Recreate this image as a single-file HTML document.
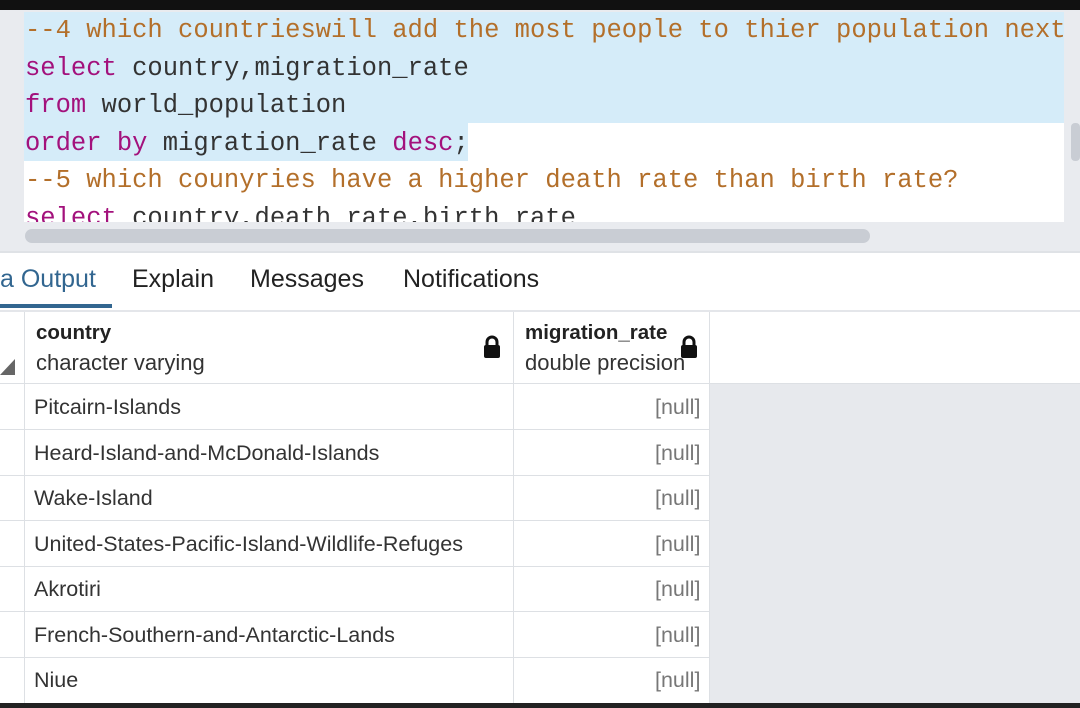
<!DOCTYPE html><html><head><style>
body{margin:0;width:1080px;height:708px;overflow:hidden;background:#fff;font-family:"Liberation Sans",sans-serif;position:relative}
.a{position:absolute}
.code{font-family:"Liberation Mono",monospace;font-size:25.5px;white-space:pre;color:#333;line-height:37.6px}
.c{color:#b36f2a}.k{color:#a3117c}
.t{position:absolute;font-size:21.5px;color:#333}
.tab{position:absolute;font-size:25px;color:#222;top:265px}
</style></head><body>
<div class="a" style="left:0;top:0;width:1080px;height:10px;background:#111"></div>
<div class="a" style="left:0;top:10px;width:1080px;height:241px;background:#e9ebef"></div>
<div class="a" style="left:24px;top:12px;width:1040px;height:210px;background:#fff;overflow:hidden">
<div class="a" style="left:0;top:0;width:1040px;height:111px;background:#d5ecf9"></div>
<div class="a" style="left:0;top:111px;width:444px;height:38px;background:#d5ecf9"></div>
<div class="a code" style="left:1px;top:0px"><span class="c">--4 which countrieswill add the most people to thier population next</span>
<span class="k">select</span> country,migration_rate
<span class="k">from</span> world_population
<span class="k">order by</span> migration_rate <span class="k">desc</span>;
<span class="c">--5 which counyries have a higher death rate than birth rate?</span>
<span class="k">select</span> country,death_rate,birth_rate</div>
</div>
<div class="a" style="left:1071px;top:123px;width:9px;height:38px;background:#c9cdd4;border-radius:4px"></div>
<div class="a" style="left:25px;top:229px;width:845px;height:14px;background:#c9cdd4;border-radius:7px"></div>
<div class="a" style="left:0;top:251px;width:1080px;height:2px;background:#dfe2e6"></div>
<div class="tab" style="left:0;color:#326690">a Output</div>
<div class="tab" style="left:132px">Explain</div>
<div class="tab" style="left:250px">Messages</div>
<div class="tab" style="left:403px">Notifications</div>
<div class="a" style="left:0;top:304px;width:112px;height:4px;background:#326690"></div>
<div class="a" style="left:0;top:310px;width:1080px;height:2px;background:#e4e6ea"></div>
<div class="a" style="left:709px;top:383px;width:371px;height:320px;background:#e7e9ed"></div>
<div class="a" style="left:0;top:383px;width:1080px;height:1px;background:#dde0e4"></div>
<div class="a" style="left:24px;top:312px;width:1px;height:391px;background:#dde0e4"></div>
<div class="a" style="left:513px;top:312px;width:1px;height:391px;background:#dde0e4"></div>
<div class="a" style="left:709px;top:312px;width:1px;height:391px;background:#dde0e4"></div>
<svg class="a" style="left:0;top:357px" width="16" height="20"><polygon points="15,2 15,18 0,18" fill="#666"/></svg>
<div class="t" style="left:36px;top:321px;font-weight:bold;color:#222;font-size:20.5px">country</div>
<div class="t" style="left:36px;top:350px;font-size:22px">character varying</div>
<div class="t" style="left:525px;top:321px;font-weight:bold;color:#222;font-size:20.5px">migration_rate</div>
<div class="t" style="left:525px;top:350px;font-size:22px">double precision</div>
<svg class="a" style="left:482px;top:335px" width="20" height="24"><path d="M5 11V7a5 5 0 0 1 10 0v4" stroke="#111" stroke-width="3" fill="none"/><rect x="2" y="10" width="16" height="13" rx="2" fill="#111"/></svg>
<svg class="a" style="left:679px;top:335px" width="20" height="24"><path d="M5 11V7a5 5 0 0 1 10 0v4" stroke="#111" stroke-width="3" fill="none"/><rect x="2" y="10" width="16" height="13" rx="2" fill="#111"/></svg>
<div class="a" style="left:0;top:429px;width:709px;height:1px;background:#dde0e4"></div>
<div class="a" style="left:0;top:475px;width:709px;height:1px;background:#dde0e4"></div>
<div class="a" style="left:0;top:520px;width:709px;height:1px;background:#dde0e4"></div>
<div class="a" style="left:0;top:566px;width:709px;height:1px;background:#dde0e4"></div>
<div class="a" style="left:0;top:611px;width:709px;height:1px;background:#dde0e4"></div>
<div class="a" style="left:0;top:657px;width:709px;height:1px;background:#dde0e4"></div>
<div class="t" style="left:34px;top:395px">Pitcairn-Islands</div>
<div class="t" style="left:34px;top:441px">Heard-Island-and-McDonald-Islands</div>
<div class="t" style="left:34px;top:486px">Wake-Island</div>
<div class="t" style="left:34px;top:532px">United-States-Pacific-Island-Wildlife-Refuges</div>
<div class="t" style="left:34px;top:577px">Akrotiri</div>
<div class="t" style="left:34px;top:623px">French-Southern-and-Antarctic-Lands</div>
<div class="t" style="left:34px;top:668px">Niue</div>
<div class="t" style="left:655px;top:395px;color:#777">[null]</div>
<div class="t" style="left:655px;top:441px;color:#777">[null]</div>
<div class="t" style="left:655px;top:486px;color:#777">[null]</div>
<div class="t" style="left:655px;top:532px;color:#777">[null]</div>
<div class="t" style="left:655px;top:577px;color:#777">[null]</div>
<div class="t" style="left:655px;top:623px;color:#777">[null]</div>
<div class="t" style="left:655px;top:668px;color:#777">[null]</div>
<div class="a" style="left:0;top:703px;width:1080px;height:5px;background:#222"></div>
</body></html>
